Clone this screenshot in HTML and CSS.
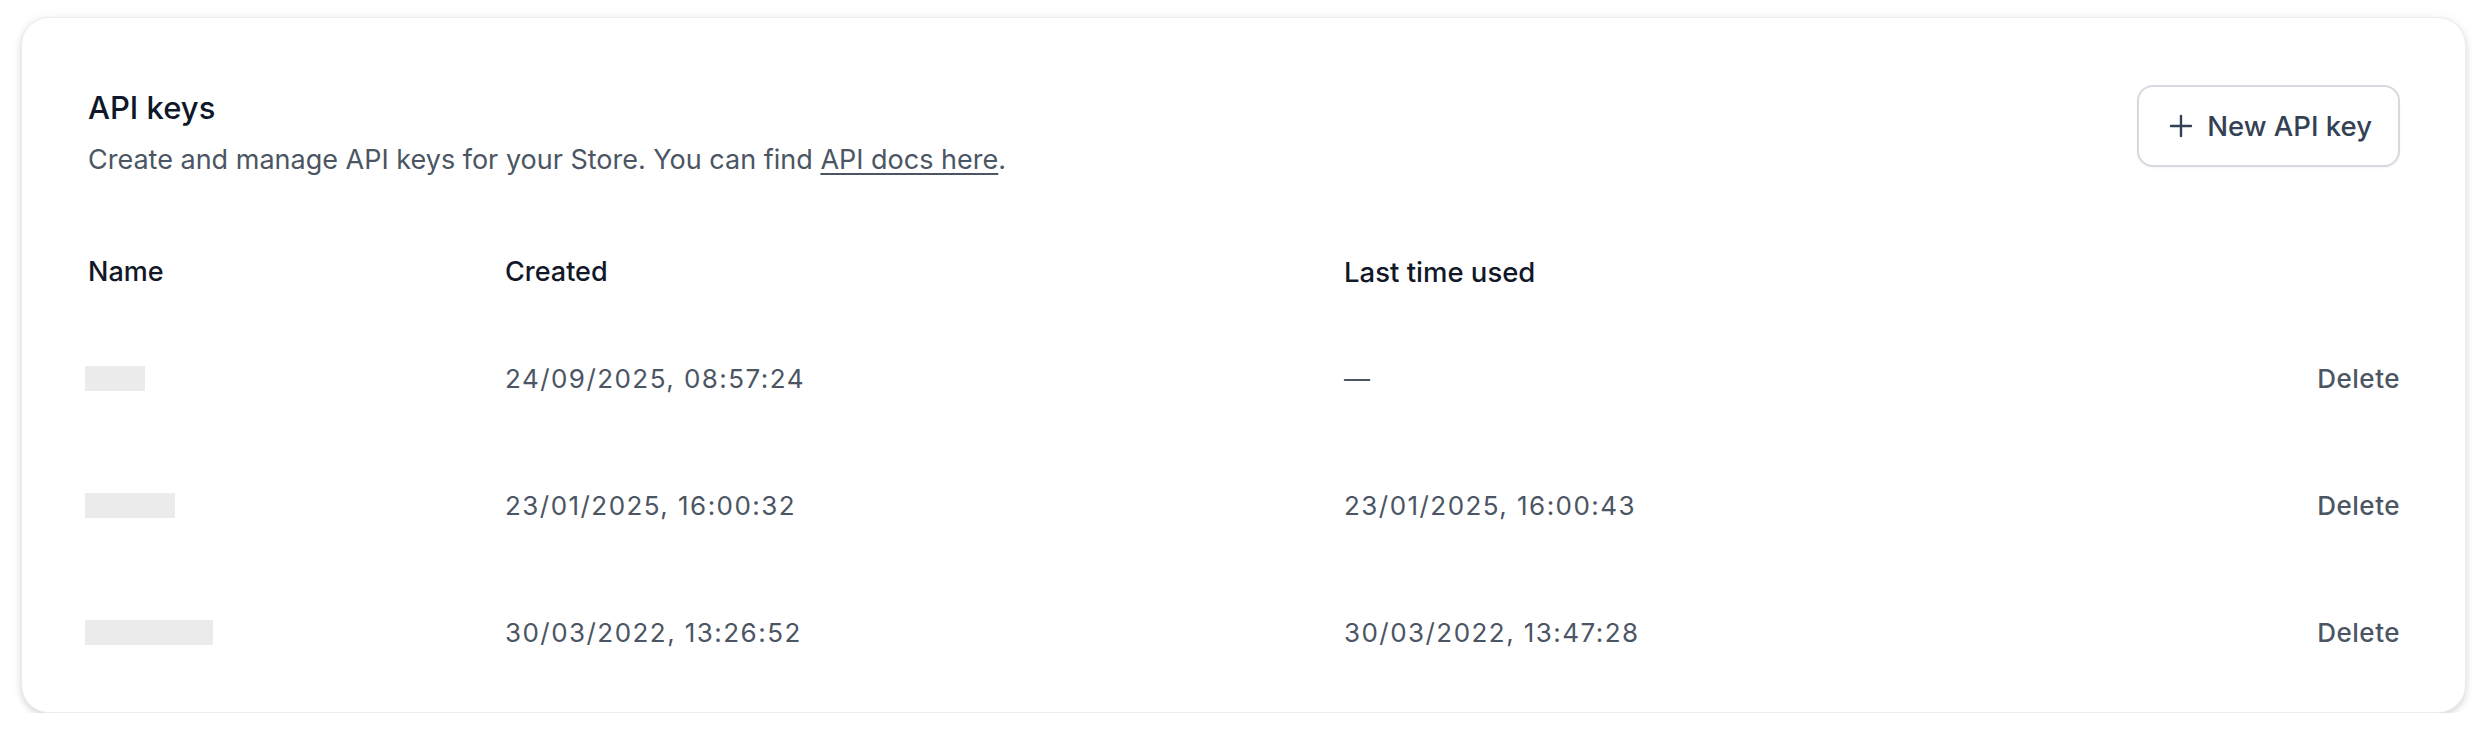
FILE: index.html
```html
<!DOCTYPE html>
<html lang="en">
<head>
<meta charset="utf-8">
<title>API keys</title>
<link rel="stylesheet" href="styles.css">
</head>
<body>
<section class="card">
  <header class="card-head">
    <div class="head-text">
      <h2 class="title">API keys</h2>
      <p class="subtitle">Create and manage API keys for your Store. You can find <a href="#" class="link">API docs here</a>.</p>
    </div>
    <button class="btn" type="button">
      <svg class="btn-icon" viewBox="0 0 24 24" width="24" height="24" aria-hidden="true"><path d="M12 2v20M2 12h20" fill="none" stroke="currentColor" stroke-width="2.4" stroke-linecap="round"/></svg>
      <span>New API key</span>
    </button>
  </header>
  <div class="table">
    <div class="row head-row">
      <div class="cell th">Name</div>
      <div class="cell th">Created</div>
      <div class="cell th">Last time used</div>
      <div class="cell"></div>
    </div>
    <div class="row">
      <div class="cell"><span class="redacted w1"></span></div>
      <div class="cell td">24/09/2025, 08:57:24</div>
      <div class="cell td">—</div>
      <div class="cell action"><a href="#" class="delete">Delete</a></div>
    </div>
    <div class="row">
      <div class="cell"><span class="redacted w2"></span></div>
      <div class="cell td">23/01/2025, 16:00:32</div>
      <div class="cell td">23/01/2025, 16:00:43</div>
      <div class="cell action"><a href="#" class="delete">Delete</a></div>
    </div>
    <div class="row">
      <div class="cell"><span class="redacted w3"></span></div>
      <div class="cell td">30/03/2022, 13:26:52</div>
      <div class="cell td">30/03/2022, 13:47:28</div>
      <div class="cell action"><a href="#" class="delete">Delete</a></div>
    </div>
  </div>
</section>
</body>
</html>
```
FILE: styles.css
```css
* { box-sizing: border-box; }
html, body { margin: 0; padding: 0; background: #ffffff; }
body {
  font-family: Inter, "Noto Sans", "Liberation Sans", sans-serif;
  padding: 17px 22px 0 21px;
}
.card {
  background: #ffffff;
  border: 1px solid #ececee;
  border-radius: 28px;
  box-shadow: 0 3px 6px rgba(0,0,0,0.14), 0 0 14px rgba(0,0,0,0.04);
  padding: 67px 65px 16px 66px;
  height: 696px;
}
.card-head {
  display: flex;
  justify-content: space-between;
  align-items: flex-start;
}
.title {
  margin: 3px 0 0;
  font-size: 31px;
  line-height: 40px;
  font-weight: 500;
  color: #0f172a;
}
.subtitle {
  margin: 14px 0 0;
  font-size: 27px;
  line-height: 36px;
  color: #4b5563;
}
.link { color: #4b5563; text-decoration: underline; text-underline-offset: 4px; }
.btn {
  display: flex;
  align-items: center;
  gap: 14px;
  height: 82px;
  padding: 0 26px 0 30px;
  background: #fff;
  border: 2px solid #d7d9e0;
  border-radius: 16px;
  box-shadow: 0 1px 2px rgba(0,0,0,0.05);
  font-family: inherit;
  font-size: 27.5px;
  font-weight: 500;
  color: #334155;
}
.btn-icon { width: 24px; height: 24px; color: #334155; }
.table { margin-top: 51px; }
.row {
  display: grid;
  grid-template-columns: 417px 839px 1fr auto;
  align-items: center;
  height: 127px;
}
.head-row { height: 86px; }
.cell { font-size: 26px; line-height: 34px; }
.th { color: #111827; font-weight: 500; font-size: 27px; }
.th:nth-child(3) { font-size: 27.5px; }
.td { color: #4b5563; letter-spacing: 1.45px; }
.action { text-align: right; }
.delete { color: #4b5563; font-weight: 500; letter-spacing: 0.5px; text-decoration: none; }
.redacted {
  display: block;
  height: 25px;
  background: #ebebeb;
  margin-left: -3px;
}
.w1 { width: 60px; }
.w2 { width: 90px; }
.w3 { width: 128px; }
```
